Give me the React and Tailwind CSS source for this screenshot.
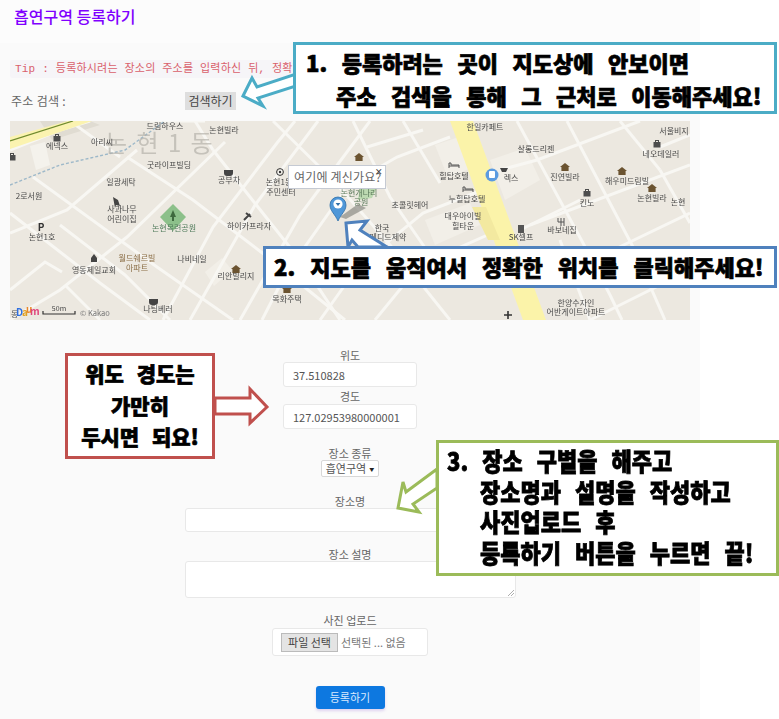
const KR = { fontFamily: '"Noto Sans CJK KR", "Noto Sans", sans-serif' };

const roads = [
  [[295,121],[277,143],[213,227],[163,320]],
  [[225,142],[127,237],[60,290],[10,320]],
  [[137,150],[67,210],[10,233]],
  [[10,290],[45,262],[62,272]],
  [[205,121],[150,121]],
  [[10,150],[60,130],[90,121]],
  [[318,121],[255,205],[190,320]],
  [[370,121],[300,215],[240,320]],
  [[345,190],[285,275],[262,320]],
  [[450,137],[397,157],[340,190]],
  [[423,130],[367,147]],
  [[490,187],[423,213],[390,240],[345,285],[320,320]],
  [[510,225],[420,265],[375,320]],
  [[640,121],[537,160],[500,170]],
  [[690,165],[530,225]],
  [[690,213],[607,253],[545,280]],
  [[690,270],[620,305],[590,320]],
  [[690,135],[660,147]],
  [[580,200],[520,230]],
  [[10,213],[100,283],[150,320]],
  [[33,177],[157,267],[233,320]],
  [[127,157],[193,200],[265,255],[345,320]],
  [[213,150],[250,197],[300,260],[340,320]],
  [[273,121],[333,180],[390,245],[450,320]],
  [[353,121],[390,197],[430,255]],
  [[403,121],[440,183]],
  [[517,121],[583,243],[610,295],[622,320]],
  [[567,121],[633,247],[665,320]],
  [[660,170],[690,223]],
  [[620,121],[660,170]],
  [[490,225],[540,320]],
  [[70,121],[120,157]],
  [[195,121],[213,150]],
  [[60,225],[125,275],[170,320]],
  [[100,320],[65,285]],
  [[560,240],[590,320]],
];

const labels = [
  ['드림하우스',165,129],['논현빌라',224,133],['에넥스',57,149],['아리씨',102,145],['굿라이프빌딩',169,168],
  ['일광세탁',121,185],['공부차',229,183],['논현1동',279,185],['주민센터',281,195],['2로서원',29,199],
  ['사과나무',122,212],['어린이집',122,222],['논현1호',42,240],['하이카프라자',249,229],['월드쉐르빌',137,261],
  ['아파트',137,271],['나비네일',192,262],['영동제일교회',94,273],['리안빌리지',236,279],['목화주택',287,302],
  ['나팅베러',158,312],['한일카페트',485,130],['살롱드리젠',536,152],['서울비지',674,134],['네오데일러',661,157],
  ['진연빌라',565,180],['해우미드림빌',627,184],['논현빌라',652,201],['킨노',587,206],['논현',678,205],
  ['힐탑호텔',454,179],['누힐탑호텔',467,202],['대우아이빌',463,219],['힐타운',463,229],['초콜릿헤어',410,208],
  ['한국',382,231],['메디드제약',388,240],['바보네집',562,233],['SK셀프',521,240],['한양수자인',576,306],['어반게이트아파트',576,315],
  ['렉스',511,181],['논현개나리',359,196],['공원',361,205],
];

const houses = [[236,269],[287,289],[359,157],[565,167],[622,171],[652,188]];
const cases = [[57,138],[657,144],[587,193],[12,157]];

function MapPicture() {
  return (
    <svg viewBox="10 121 680 199" className="block h-[199px] w-[680px] blur-[0.35px]" style={KR}>
      <rect x="10" y="121" width="680" height="199" fill="#ece8e0" />
      <polygon points="52,140 100,125 90,121 40,121" fill="#e0dcd2" />
      <polygon points="30,146 45,142 50,165 36,170" fill="#f4f2ec" />
      <polygon points="205,272 222,258 232,270 214,286" fill="#f2efe8" />
      <polygon points="435,145 465,135 478,165 448,178" fill="#f2efe8" />
      <polygon points="490,160 525,148 540,180 505,200" fill="#f2efe8" />
      <polygon points="425,220 470,203 480,225 435,245" fill="#f2efe8" />
      {roads.map((r, i) => (
        <polyline key={i} points={r.map((p) => p.join(',')).join(' ')} fill="none" stroke="#f8f7f3" strokeWidth="3" />
      ))}
      <polygon points="10,137 68,121 92,121 10,149" fill="#fbf3b0" />
      <line x1="10" y1="141" x2="73" y2="121" stroke="#6f8a2e" strokeWidth="1.3" />
      <polygon points="450,121 473,121 546,320 523,320" fill="#fbf3a9" />
      <polygon points="472,207 486,207 500,240 488,240" fill="#f3e9a0" />
      <polyline points="10,185 60,165 125,150 165,121" fill="none" stroke="#9db8c9" strokeWidth="1.4" strokeDasharray="3 2" />
      <polygon points="173,204 186,217 173,231 160,217" fill="#8cc08a" />
      <path d="M173 210l3 7h-2v4h-2v-4h-2z" fill="#3f6a3f" />
      <polygon points="360,185 378,185 372,198 358,200" fill="#bcd9b1" />
      <text x="105" y="152" fontSize="24" fill="#b5b2ab" letterSpacing="2" opacity=".7">논 현 1 동</text>
      {labels.map(([t, x, y], i) => (
        <text key={i} x={x} y={y} fontSize="8" textAnchor="middle" fill={t === '월드쉐르빌' || t === '아파트' ? '#8a6d45' : t === '공원' || t === '논현개나리' ? '#5b7a5b' : '#4a4a4a'}>{t}</text>
      ))}
      <text x="174" y="231" fontSize="8" textAnchor="middle" fill="#4f7a5a">논현목련공원</text>
      {houses.map(([x, y], i) => (
        <path key={i} d={`M${x} ${y - 4}l5 4h-1.4v4h-7.2v-4h-1.4z`} fill="#6b5330" />
      ))}
      {cases.map(([x, y], i) => (
        <g key={i}>
          <rect x={x - 3.5} y={y - 2} width="7" height="5.5" fill="#4d4d4d" />
          <rect x={x - 1.5} y={y - 3.5} width="3" height="2" fill="none" stroke="#4d4d4d" />
        </g>
      ))}
      <circle cx="280" cy="172" r="3.4" fill="none" stroke="#333" />
      <circle cx="280" cy="172" r="1.2" fill="#333" />
      <text x="41" y="231" fontSize="10" fontWeight="700" textAnchor="middle" fill="#333">P</text>
      <path d="M224 170h9v3a3 3 0 0 1-3 3h-3a3 3 0 0 1-3-3z" fill="#444" />
      <path d="M149 299h9v3a3 3 0 0 1-3 3h-3a3 3 0 0 1-3-3z" fill="#444" />
      <path d="M113 197l5 3 2 6-4-1-1 3z" fill="#444" />
      <path d="M250 214l-6 6M246 213l5 4" stroke="#444" strokeWidth="2" />
      <path d="M91 258l3-4 3 4v4h-6z" fill="#444" />
      <path d="M449 168v-5h2v2h8v3M449 166h10" stroke="#555" fill="none" />
      <path d="M463 192v-5h2v2h8v3M463 190h10" stroke="#555" fill="none" />
      <path d="M561 218v8M564 218v8M558 218v4h6" stroke="#555" fill="none" />
      <rect x="518" y="225" width="6" height="8" fill="#555" />
      <circle cx="492" cy="175" r="6.5" fill="#5b9be0" />
      <rect x="489" y="171" width="6" height="7" rx="1" fill="#fff" />
      <path d="M500 168h8l-2 4h-4z" fill="#444" />
      <path d="M508 311v8M504 315h8" stroke="#333" strokeWidth="1.6" />
      <polygon points="340,217 358,204 366,208 346,219" fill="#8b8b84" opacity=".7" />
      <path d="M338 221c-3-7-8-10-8-16a8 8 0 0 1 16 0c0 6-5 9-8 16z" fill="#4f97d8" stroke="#2f6fa8" strokeWidth=".8" />
      <circle cx="338" cy="204" r="4.6" fill="#fff" />
      <path d="M335.6 203h4.8l-2.4 3z" fill="#2f6fa8" />
      <text x="11" y="317" fontSize="8" fill="#555">동</text>
      <text x="16" y="316" fontSize="10" fontWeight="700" fill="#2f6fe0">D</text>
      <text x="22" y="316" fontSize="10" fontWeight="700" fill="#e0a020">a</text>
      <text x="26" y="313" fontSize="10" fontWeight="700" fill="#e8862a">u</text>
      <text x="30" y="315" fontSize="10" fontWeight="700" fill="#e0457b">m</text>
      <path d="M43 311v3h32v-3" fill="none" stroke="#333" strokeWidth="1.2" />
      <text x="59" y="311" fontSize="7" textAnchor="middle" fill="#444">50m</text>
      <text x="80" y="316" fontSize="7.5" fill="#777">© Kakao</text>
    </svg>
  );
}

function Field({ label, children, className = '' }) {
  return (
    <div className={`flex flex-col items-center ${className}`}>
      <div className="text-[11px] leading-[16px] text-[#666]">{label}</div>
      {children}
    </div>
  );
}

const inputCls = 'rounded-[3px] border border-[#e8e8e8] bg-white';
const heavy = '[-webkit-text-stroke:0.7px_black]';

export default function App() {
  return (
    <div className="relative h-[719px] w-[779px] overflow-hidden bg-white" style={KR}>
      <div className="h-[719px] w-[700px] bg-[#fafafa]">
        <div className="h-[43px] bg-[#fcfcfc] pl-[14px] pt-[4px] text-[16px] leading-[24px] font-medium text-[#8000ff]">
          흡연구역 등록하기
        </div>

        <div className="ml-[10px] mt-[17px] h-[18px] w-[680px] whitespace-nowrap rounded-[2px] bg-[#f6f5f8] pl-[5px] text-[11px] leading-[18px] tracking-[0.2px] text-[#d9606b]" style={{ fontFamily: '"Liberation Mono", "Noto Sans CJK KR", monospace' }}>
          Tip : 등록하시려는 장소의 주소를 입력하신 뒤, 정확한 위치를 클릭해주세요
        </div>

        <div className="ml-[11px] mt-[14px] flex h-[18px] items-center">
          <span className="w-[174px] text-[12px] tracking-[0.3px] text-[#666]">주소 검색 :</span>
          <button className="h-[18px] w-[51px] bg-[#dedede] text-[12px] leading-[18px] text-[#444]">검색하기</button>
        </div>

        <div className="relative ml-[10px] mt-[11px] w-[680px]">
          <MapPicture />
          <div className="absolute left-[278px] top-[44px] flex h-[24px] w-[98px] items-center whitespace-nowrap border border-[#c5cad3] bg-white pl-[5px] text-[12px] tracking-[0.2px] text-[#666]">
            여기에 계신가요?
            <span className="absolute right-[2px] top-[0px] text-[8px] leading-[12px] font-bold text-[#333]">×</span>
          </div>
        </div>

        <div className="mt-[27px] flex flex-col items-center">
          <Field label="위도">
            <div className={`${inputCls} mt-[-1px] h-[25px] w-[134px] pl-[9px] text-[11px] leading-[24px] text-[#555]`}>37.510828</div>
          </Field>
          <Field label="경도" className="mt-[1px]">
            <div className={`${inputCls} h-[25px] w-[134px] pl-[9px] text-[11px] leading-[24px] whitespace-nowrap text-[#555]`}>127.02953980000001</div>
          </Field>
          <Field label="장소 종류" className="mt-[16px]">
            <div className="mt-[-1px] flex h-[17px] w-[58px] items-center justify-center gap-[3px] rounded-[2px] border border-[#d8d8d8] bg-white text-[11px] text-[#555]">
              흡연구역<span className="text-[5px] text-[#222]">▼</span>
            </div>
          </Field>
          <Field label="장소명" className="mt-[16px]">
            <div className={`${inputCls} mt-[-1px] h-[24px] w-[331px]`} />
          </Field>
          <Field label="장소 설명" className="mt-[14px]">
            <div className={`${inputCls} relative mt-[-1px] h-[37px] w-[331px]`}>
              <svg viewBox="0 0 6 6" className="absolute bottom-[1px] right-[1px] h-[6px] w-[6px]">
                <path d="M0 6L6 0M3 6L6 3" stroke="#999" strokeWidth=".8" />
              </svg>
            </div>
          </Field>
          <Field label="사진 업로드" className="mt-[14px]">
            <div className={`${inputCls} flex h-[28px] w-[156px] items-center pl-[8px] text-[11px] text-[#777]`}>
              <span className="flex h-[19px] w-[57px] items-center justify-center border border-[#bbb] bg-[#e4e4e4] text-[#444]">파일 선택</span>
              <span className="ml-[3px] whitespace-nowrap">선택된 ... 없음</span>
            </div>
          </Field>
          <button className="mt-[30px] h-[23px] w-[69px] rounded-[3px] bg-[#0d78e0] text-[11px] text-[#dbeafe] shadow-[0_2px_3px_rgba(160,120,220,0.3)]">
            등록하기
          </button>
        </div>
      </div>

      <svg viewBox="0 0 779 719" className="pointer-events-none absolute left-0 top-0 h-[719px] w-[779px]">
        <polygon points="243,96 252,78 257,87 296,74 296,86 258,98 263,106" fill="#fff" stroke="#4bacc6" strokeWidth="3" />
        <polygon points="346,223 367,221 360,230 387,247 358,247 352,240 348,247" fill="#fff" stroke="#4f81bd" strokeWidth="3" />
        <polygon points="215,398 250,398 250,389 267,407 250,423 250,414 215,414" fill="#fff" stroke="#c0504d" strokeWidth="3" />
        <polygon points="398,508 403,482 406,492 437,469 437,488 413,504 419,512" fill="#fff" stroke="#9bbb59" strokeWidth="3" />
      </svg>

      <div className={`absolute left-[293px] top-[42px] h-[72px] w-[484px] border-[3px] border-[#4bacc6] bg-white pl-[10px] pt-[1px] text-[22px] leading-[33px] font-black whitespace-nowrap text-black [word-spacing:9.5px] ${heavy}`}>
        <div>1. 등록하려는 곳이 지도상에 안보이면</div>
        <div className="pl-[30px]">주소 검색을 통해 그 근처로 이동해주세요!</div>
      </div>
      <div className={`absolute left-[263px] top-[246px] h-[42px] w-[514px] border-[3px] border-[#4f81bd] bg-white pl-[8px] text-[22px] leading-[35px] font-black whitespace-nowrap text-black [word-spacing:10px] ${heavy}`}>
        2. 지도를 움직여서 정확한 위치를 클릭해주세요!
      </div>
      <div className={`absolute left-[65px] top-[353px] h-[106px] w-[150px] border-[3px] border-[#c0504d] bg-white pt-[2px] text-center text-[21px] leading-[31.5px] font-black whitespace-nowrap text-black [word-spacing:8px] ${heavy}`}>
        <div>위도 경도는</div>
        <div>가만히</div>
        <div>두시면 되요!</div>
      </div>
      <div className={`absolute left-[436px] top-[440px] h-[136px] w-[343px] border-[3px] border-[#9bbb59] bg-white pl-[8px] pt-[2px] text-[22px] leading-[30.5px] font-black whitespace-nowrap text-black [word-spacing:9px] ${heavy}`}>
        <div className="scale-y-[1.12]">3. 장소 구별을 해주고</div>
        <div className="scale-y-[1.12] pl-[33px]">장소명과 설명을 작성하고</div>
        <div className="scale-y-[1.12] pl-[33px]">사진업로드 후</div>
        <div className="scale-y-[1.12] pl-[33px]">등록하기 버튼을 누르면 끝!</div>
      </div>
    </div>
  );
}
